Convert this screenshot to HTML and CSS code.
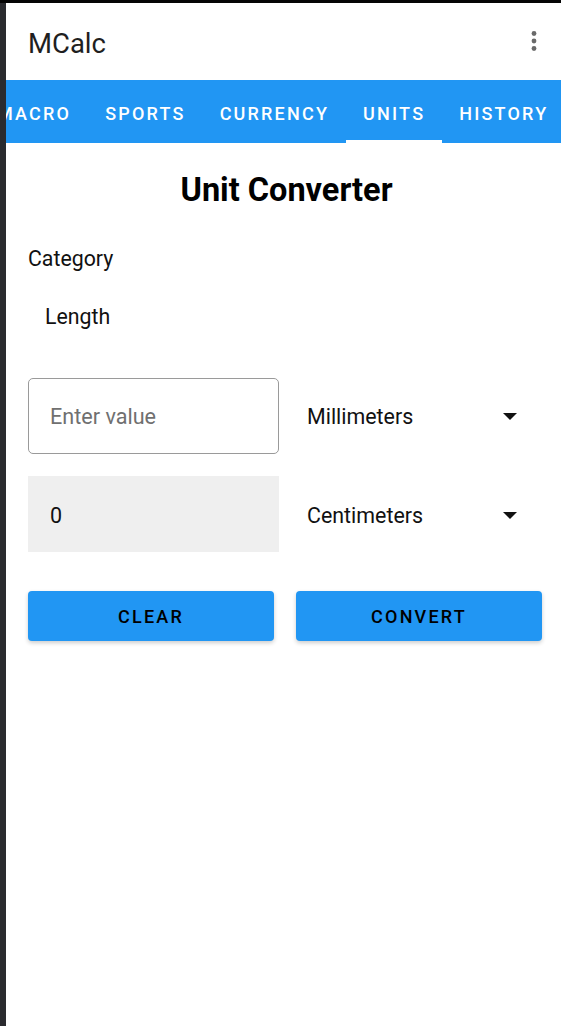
FILE: index.html
```html
<!DOCTYPE html>
<html>
<head>
<meta charset="utf-8">
<link rel="stylesheet" href="styles.css">
</head>
<body>
<div class="app">
  <header class="appbar">
    <span class="app-title">MCalc</span>
    <svg class="kebab" width="24" height="24" viewBox="0 0 24 24"><circle cx="12" cy="4.5" r="2.4"/><circle cx="12" cy="12" r="2.4"/><circle cx="12" cy="19.5" r="2.4"/></svg>
  </header>
  <nav class="tabbar">
    <div class="tabs">
      <div class="tab">MACRO</div>
      <div class="tab">SPORTS</div>
      <div class="tab">CURRENCY</div>
      <div class="tab active">UNITS</div>
      <div class="tab">HISTORY</div>
    </div>
  </nav>
  <main class="content">
    <h1 class="title">Unit Converter</h1>
    <div class="label">Category</div>
    <div class="category">Length</div>
    <div class="row first">
      <div class="input">Enter value</div>
      <div class="spinner"><span>Millimeters</span><span class="arrow"></span></div>
    </div>
    <div class="row second">
      <div class="output">0</div>
      <div class="spinner"><span>Centimeters</span><span class="arrow"></span></div>
    </div>
    <div class="buttons">
      <button class="btn">CLEAR</button>
      <button class="btn">CONVERT</button>
    </div>
  </main>
</div>
</body>
</html>
```
FILE: styles.css
```css
html, body { margin: 0; padding: 0; }
body {
  background: #2a2b2f;
  border-top: 3px solid #050505;
  height: 1023px;
  overflow: hidden;
  font-family: Roboto, "Noto Sans", sans-serif;
}
.app {
  margin-left: 6px;
  background: #ffffff;
  height: 1023px;
  display: flex;
  flex-direction: column;
}
.appbar {
  height: 77px;
  box-sizing: border-box;
  display: flex;
  align-items: center;
  justify-content: space-between;
  padding: 2px 15px 0 22px;
  flex-shrink: 0;
}
.app-title {
  font-size: 27.5px;
  color: #1f1f1f;
  font-weight: 400;
  padding-top: 2px;
}
.kebab { fill: #6a6a6a; margin-top: -4px; }
.tabbar {
  height: 63px;
  background: #2196f3;
  overflow: hidden;
  flex-shrink: 0;
}
.tabs {
  display: flex;
  height: 100%;
  margin-left: -26px;
}
.tab {
  flex-shrink: 0;
  height: 100%;
  box-sizing: border-box;
  padding: 3px 17px 0;
  display: flex;
  align-items: center;
  color: #ffffff;
  font-size: 18px;
  font-weight: 500;
  letter-spacing: 2.2px;
}
.tab.active {
  border-bottom: 3px solid #ffffff;
  padding-top: 6px;
}
.content {
  padding: 0 19px 0 22px;
}
.title {
  margin: 28px 0 0;
  text-align: center;
  font-size: 32.5px;
  line-height: 38px;
  font-weight: 700;
  color: #000;
  padding-left: 3px;
}
.label {
  margin-top: 38px;
  font-size: 21.3px;
  line-height: 24px;
  color: #111;
}
.category {
  margin-top: 34px;
  padding-left: 17px;
  font-size: 21.3px;
  line-height: 24px;
  color: #111;
}
.row {
  display: grid;
  grid-template-columns: 251px 1fr;
  height: 76px;
}
.row.first { margin-top: 49px; }
.row.second { margin-top: 22px; }
.input {
  box-sizing: border-box;
  border: 1px solid #9a9a9a;
  border-radius: 5px;
  padding-left: 21px;
  display: flex;
  align-items: center;
  font-size: 21.6px;
  color: #707070;
}
.output {
  background: #efefef;
  padding: 2px 0 0 22px;
  display: flex;
  align-items: center;
  font-size: 21.5px;
  color: #111;
}
.spinner {
  display: flex;
  align-items: center;
  justify-content: space-between;
  padding: 0 25px 0 28px;
  font-size: 21.4px;
  color: #111;
}
.row.second .spinner { padding-top: 3px; }
.arrow {
  width: 0;
  height: 0;
  border-left: 7px solid transparent;
  border-right: 7px solid transparent;
  border-top: 7px solid #111;
}
.buttons {
  margin-top: 39px;
  display: grid;
  grid-template-columns: 1fr 1fr;
  column-gap: 22px;
}
.btn {
  height: 50px;
  border: none;
  border-radius: 4px;
  background: #2196f3;
  box-shadow: 0 2px 4px rgba(0,0,0,0.2);
  font-family: Roboto, "Noto Sans", sans-serif;
  font-size: 18px;
  font-weight: 500;
  letter-spacing: 2.2px;
  color: #000;
  padding: 0;
}
```
